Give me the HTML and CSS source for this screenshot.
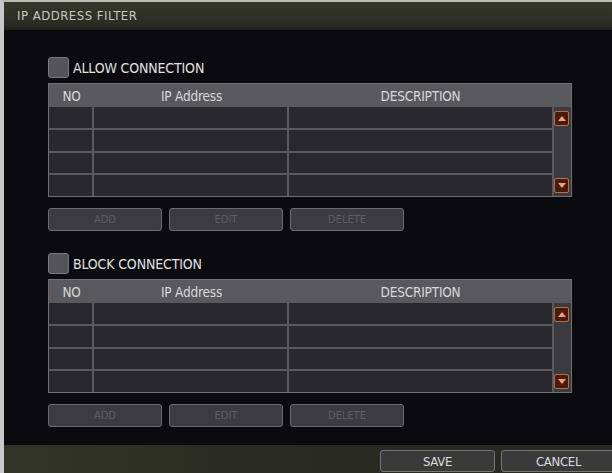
FILE: index.html
```html
<!DOCTYPE html>
<html>
<head>
<meta charset="utf-8">
<link rel="stylesheet" href="styles.css">
</head>
<body>
<div class="window">
  <div class="titlebar">IP ADDRESS FILTER</div>
  <div class="content">
    <section class="filter">
      <label class="check"><span class="box"></span>ALLOW CONNECTION</label>
      <div class="table">
        <div class="thead">
          <span>NO</span><span>IP Address</span><span class="desc">DESCRIPTION</span>
        </div>
        <div class="tbody">
          <span class="c"></span><span class="c"></span><span class="c"></span>
          <div class="scroll"><span class="arrow up"></span><span class="arrow down"></span></div>
          <span class="c"></span><span class="c"></span><span class="c"></span>
          <span class="c"></span><span class="c"></span><span class="c"></span>
          <span class="c"></span><span class="c"></span><span class="c"></span>
        </div>
      </div>
      <div class="actions">
        <button class="btn">ADD</button><button class="btn">EDIT</button><button class="btn">DELETE</button>
      </div>
    </section>
    <section class="filter">
      <label class="check"><span class="box"></span>BLOCK CONNECTION</label>
      <div class="table">
        <div class="thead">
          <span>NO</span><span>IP Address</span><span class="desc">DESCRIPTION</span>
        </div>
        <div class="tbody">
          <span class="c"></span><span class="c"></span><span class="c"></span>
          <div class="scroll"><span class="arrow up"></span><span class="arrow down"></span></div>
          <span class="c"></span><span class="c"></span><span class="c"></span>
          <span class="c"></span><span class="c"></span><span class="c"></span>
          <span class="c"></span><span class="c"></span><span class="c"></span>
        </div>
      </div>
      <div class="actions">
        <button class="btn">ADD</button><button class="btn">EDIT</button><button class="btn">DELETE</button>
      </div>
    </section>
  </div>
  <div class="footer">
    <button class="fbtn">SAVE</button><button class="fbtn">CANCEL</button>
  </div>
</div>
</body>
</html>
```
FILE: styles.css
```css
html, body {
  margin: 0;
  padding: 0;
  background: #0b0b0f;
}
body {
  width: 612px;
  height: 473px;
  overflow: hidden;
  font-family: "DejaVu Sans Condensed", "Liberation Sans", sans-serif;
}
.window {
  height: 471px;
  border-top: 2px solid #b9b9b9;
  border-left: 4px solid #c9c9c9;
  display: flex;
  flex-direction: column;
}
.titlebar {
  height: 28px;
  flex: none;
  background: linear-gradient(#35372c, #2a2b22 85%, #1d1e18);
  color: #c9c9c0;
  font-size: 13px;
  letter-spacing: 0.5px;
  line-height: 28px;
  padding-left: 13px;
}
.content {
  flex: 1;
  padding: 27px 0 0 44px;
  display: flex;
  flex-direction: column;
  gap: 22px;
}
.check {
  display: flex;
  align-items: center;
  gap: 4px;
  height: 21px;
  color: #e2e2e2;
  font-size: 14px;
  letter-spacing: -0.15px;
}
.box {
  width: 19px;
  height: 19px;
  background: #545458;
  border: 1px solid #7a7a7e;
  border-radius: 3px;
}
.table {
  margin-top: 5px;
  width: 522px;
  border: 1px solid #707074;
  background: #5a5a5e;
}
.thead {
  display: grid;
  grid-template-columns: 45px 195px 1fr;
  height: 23px;
  align-items: center;
  background: #59595d;
  color: #d8d8d8;
  font-size: 13.5px;
  letter-spacing: -0.2px;
  text-align: center;
}
.thead .desc {
  padding-right: 19px;
}
.tbody {
  display: grid;
  grid-template-columns: 43px 193px 263px 17px;
  grid-template-rows: repeat(4, 1fr);
  gap: 2px;
  height: 89px;
}
.c {
  background: #29292d;
}
.scroll {
  grid-column: 4;
  grid-row: 1 / span 4;
  background: #3b3b3f;
  display: flex;
  flex-direction: column;
  justify-content: space-between;
  padding: 4px 3px 3px 0;
}
.arrow {
  width: 13px;
  height: 13px;
  background: #4b1a0d;
  border: 1px solid #b0724c;
  border-radius: 2px;
  display: flex;
  align-items: center;
  justify-content: center;
}
.arrow::after {
  content: "";
  border-left: 4px solid transparent;
  border-right: 4px solid transparent;
}
.arrow.up::after {
  border-bottom: 5px solid #eaa27a;
}
.arrow.down::after {
  border-top: 5px solid #eaa27a;
}
.actions {
  display: flex;
  gap: 7px;
  margin-top: 11px;
}
.btn {
  width: 114px;
  height: 23px;
  background: #3c3c40;
  border: 1px solid #6c6c70;
  border-radius: 3px;
  color: #5e5e62;
  font-family: inherit;
  font-size: 11px;
  padding: 0;
}
.footer {
  height: 28px;
  flex: none;
  background: linear-gradient(90deg, #33352a, #2a2b22 40%, #27281f);
  display: flex;
  align-items: flex-end;
  justify-content: flex-end;
  gap: 6px;
  padding-bottom: 1px;
  box-sizing: border-box;
  margin-right: -4px;
}
.fbtn {
  width: 115px;
  height: 22px;
  background: #3a3a3b;
  border: 1px solid #76767a;
  border-radius: 3px;
  color: #dcdcdc;
  font-family: inherit;
  font-size: 13px;
  letter-spacing: -0.3px;
  padding: 0;
}
```
